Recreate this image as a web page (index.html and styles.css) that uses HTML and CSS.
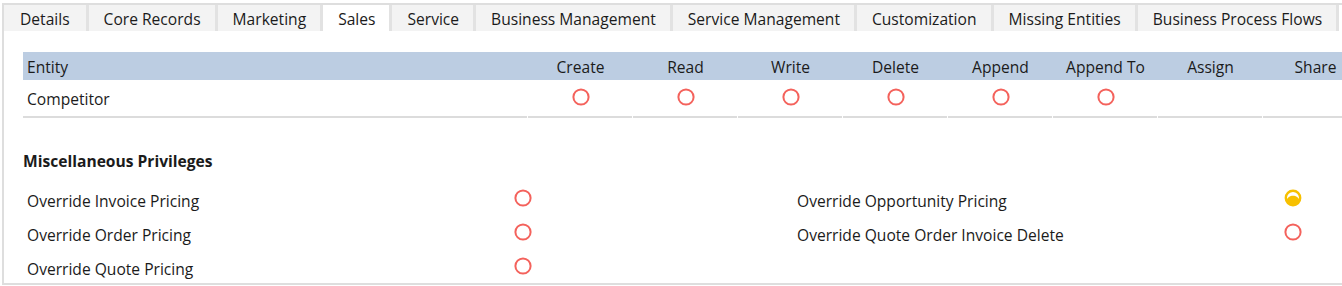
FILE: index.html
```html
<!DOCTYPE html>
<html>
<head>
<meta charset="utf-8">
<link rel="stylesheet" href="styles.css">
</head>
<body>
<div class="frame">
  <div class="tabs">
    <div class="tab">Details</div>
    <div class="tab">Core Records</div>
    <div class="tab">Marketing</div>
    <div class="tab active">Sales</div>
    <div class="tab">Service</div>
    <div class="tab">Business Management</div>
    <div class="tab">Service Management</div>
    <div class="tab">Customization</div>
    <div class="tab">Missing Entities</div>
    <div class="tab">Business Process Flows</div>
  </div>
  <div class="panel">
    <table class="grid">
      <colgroup>
        <col class="c-entity"><col class="c-priv"><col class="c-priv"><col class="c-priv"><col class="c-priv"><col class="c-priv"><col class="c-priv"><col class="c-priv"><col class="c-priv">
      </colgroup>
      <thead>
        <tr>
          <th class="left">Entity</th>
          <th>Create</th><th>Read</th><th>Write</th><th>Delete</th><th>Append</th><th>Append To</th><th>Assign</th><th>Share</th>
        </tr>
      </thead>
      <tbody>
        <tr>
          <td class="left">Competitor</td>
          <td><svg class="ico" viewBox="0 0 18 18"><circle cx="9" cy="9" r="7.6" class="none"/></svg></td>
          <td><svg class="ico" viewBox="0 0 18 18"><circle cx="9" cy="9" r="7.6" class="none"/></svg></td>
          <td><svg class="ico" viewBox="0 0 18 18"><circle cx="9" cy="9" r="7.6" class="none"/></svg></td>
          <td><svg class="ico" viewBox="0 0 18 18"><circle cx="9" cy="9" r="7.6" class="none"/></svg></td>
          <td><svg class="ico" viewBox="0 0 18 18"><circle cx="9" cy="9" r="7.6" class="none"/></svg></td>
          <td><svg class="ico" viewBox="0 0 18 18"><circle cx="9" cy="9" r="7.6" class="none"/></svg></td>
          <td></td>
          <td></td>
        </tr>
      </tbody>
    </table>

    <h3 class="misc-title">Miscellaneous Privileges</h3>

    <div class="misc">
      <div class="item"><span class="label">Override Invoice Pricing</span><svg class="ico" viewBox="0 0 18 18"><circle cx="9" cy="9" r="7.6" class="none"/></svg></div>
      <div class="item"><span class="label">Override Opportunity Pricing</span><svg class="ico" viewBox="0 0 18 18"><circle cx="9" cy="9" r="7.2" class="user"/><path class="user-fill" d="M2.4 12 C3.2 8.2 6 6.8 9 6.8 C12 6.8 14.8 8.2 15.6 12 A7.2 7.2 0 0 1 2.4 12 Z"/></svg></div>
      <div class="item"><span class="label">Override Order Pricing</span><svg class="ico" viewBox="0 0 18 18"><circle cx="9" cy="9" r="7.6" class="none"/></svg></div>
      <div class="item"><span class="label">Override Quote Order Invoice Delete</span><svg class="ico" viewBox="0 0 18 18"><circle cx="9" cy="9" r="7.6" class="none"/></svg></div>
      <div class="item"><span class="label">Override Quote Pricing</span><svg class="ico" viewBox="0 0 18 18"><circle cx="9" cy="9" r="7.6" class="none"/></svg></div>
    </div>
  </div>
</div>
</body>
</html>
```

FILE: styles.css
```css
html, body {
  margin: 0;
  padding: 0;
  background: #fff;
  overflow: hidden;
}
body {
  font-family: "Open Sans", "Noto Sans", "Liberation Sans", sans-serif;
  font-size: 15.6px;
  color: #1b1b1b;
  width: 1342px;
  height: 286px;
}
.frame {
  margin: 3px 0 0 2px;
  border-top: 2px solid #dedede;
  border-left: 2px solid #dedede;
  border-bottom: 2px solid #dedede;
  height: 282px;
  box-sizing: border-box;
  width: 1340px;
  overflow: hidden;
}
.tabs {
  display: flex;
  height: 26px;
}
.tab {
  background: #f3f3f3;
  height: 24px;
  padding: 2px 14px 0 15px;
  line-height: 24px;
  border-right: 3px solid #e2e2e2;
  white-space: nowrap;
}
.tab:first-child {
  padding-left: 16px;
  padding-right: 16px;
}
.tab.active {
  background: #fff;
}
.panel {
  padding: 21px 0 0 19px;
}
.grid {
  border-collapse: collapse;
  table-layout: fixed;
  width: 1345px;
}
.c-entity { width: 505px; }
.c-priv { width: 105px; }
.grid th {
  background: #bccde2;
  font-weight: normal;
  height: 26px;
  padding: 2px 0 0 0;
  text-align: center;
  vertical-align: middle;
}
.grid td {
  height: 38px;
  padding: 0;
  text-align: center;
  vertical-align: middle;
  background: linear-gradient(#dcdcdc, #dcdcdc) left bottom / calc(100% - 1px) 2px no-repeat;
}
.grid .left {
  text-align: left;
  padding-left: 4px;
}
.grid td .ico {
  margin-top: -7px;
}
.ico {
  width: 18px;
  height: 18px;
  display: inline-block;
  vertical-align: middle;
  flex: none;
}
.none {
  fill: none;
  stroke: #f4625c;
  stroke-width: 2;
}
.user {
  fill: none;
  stroke: #f7c000;
  stroke-width: 2.4;
}
.user-fill {
  fill: #f7c000;
}
.misc-title {
  font-size: 15.6px;
  font-weight: bold;
  margin: 33px 0 13px 0;
  line-height: 20px;
}
.misc {
  display: grid;
  grid-template-columns: 770px 770px;
}
.item {
  display: flex;
  align-items: flex-start;
  height: 34px;
  padding-left: 4px;
}
.label {
  width: 487px;
  line-height: 34px;
  white-space: nowrap;
}
.item .ico {
  margin-top: 5px;
}
```
